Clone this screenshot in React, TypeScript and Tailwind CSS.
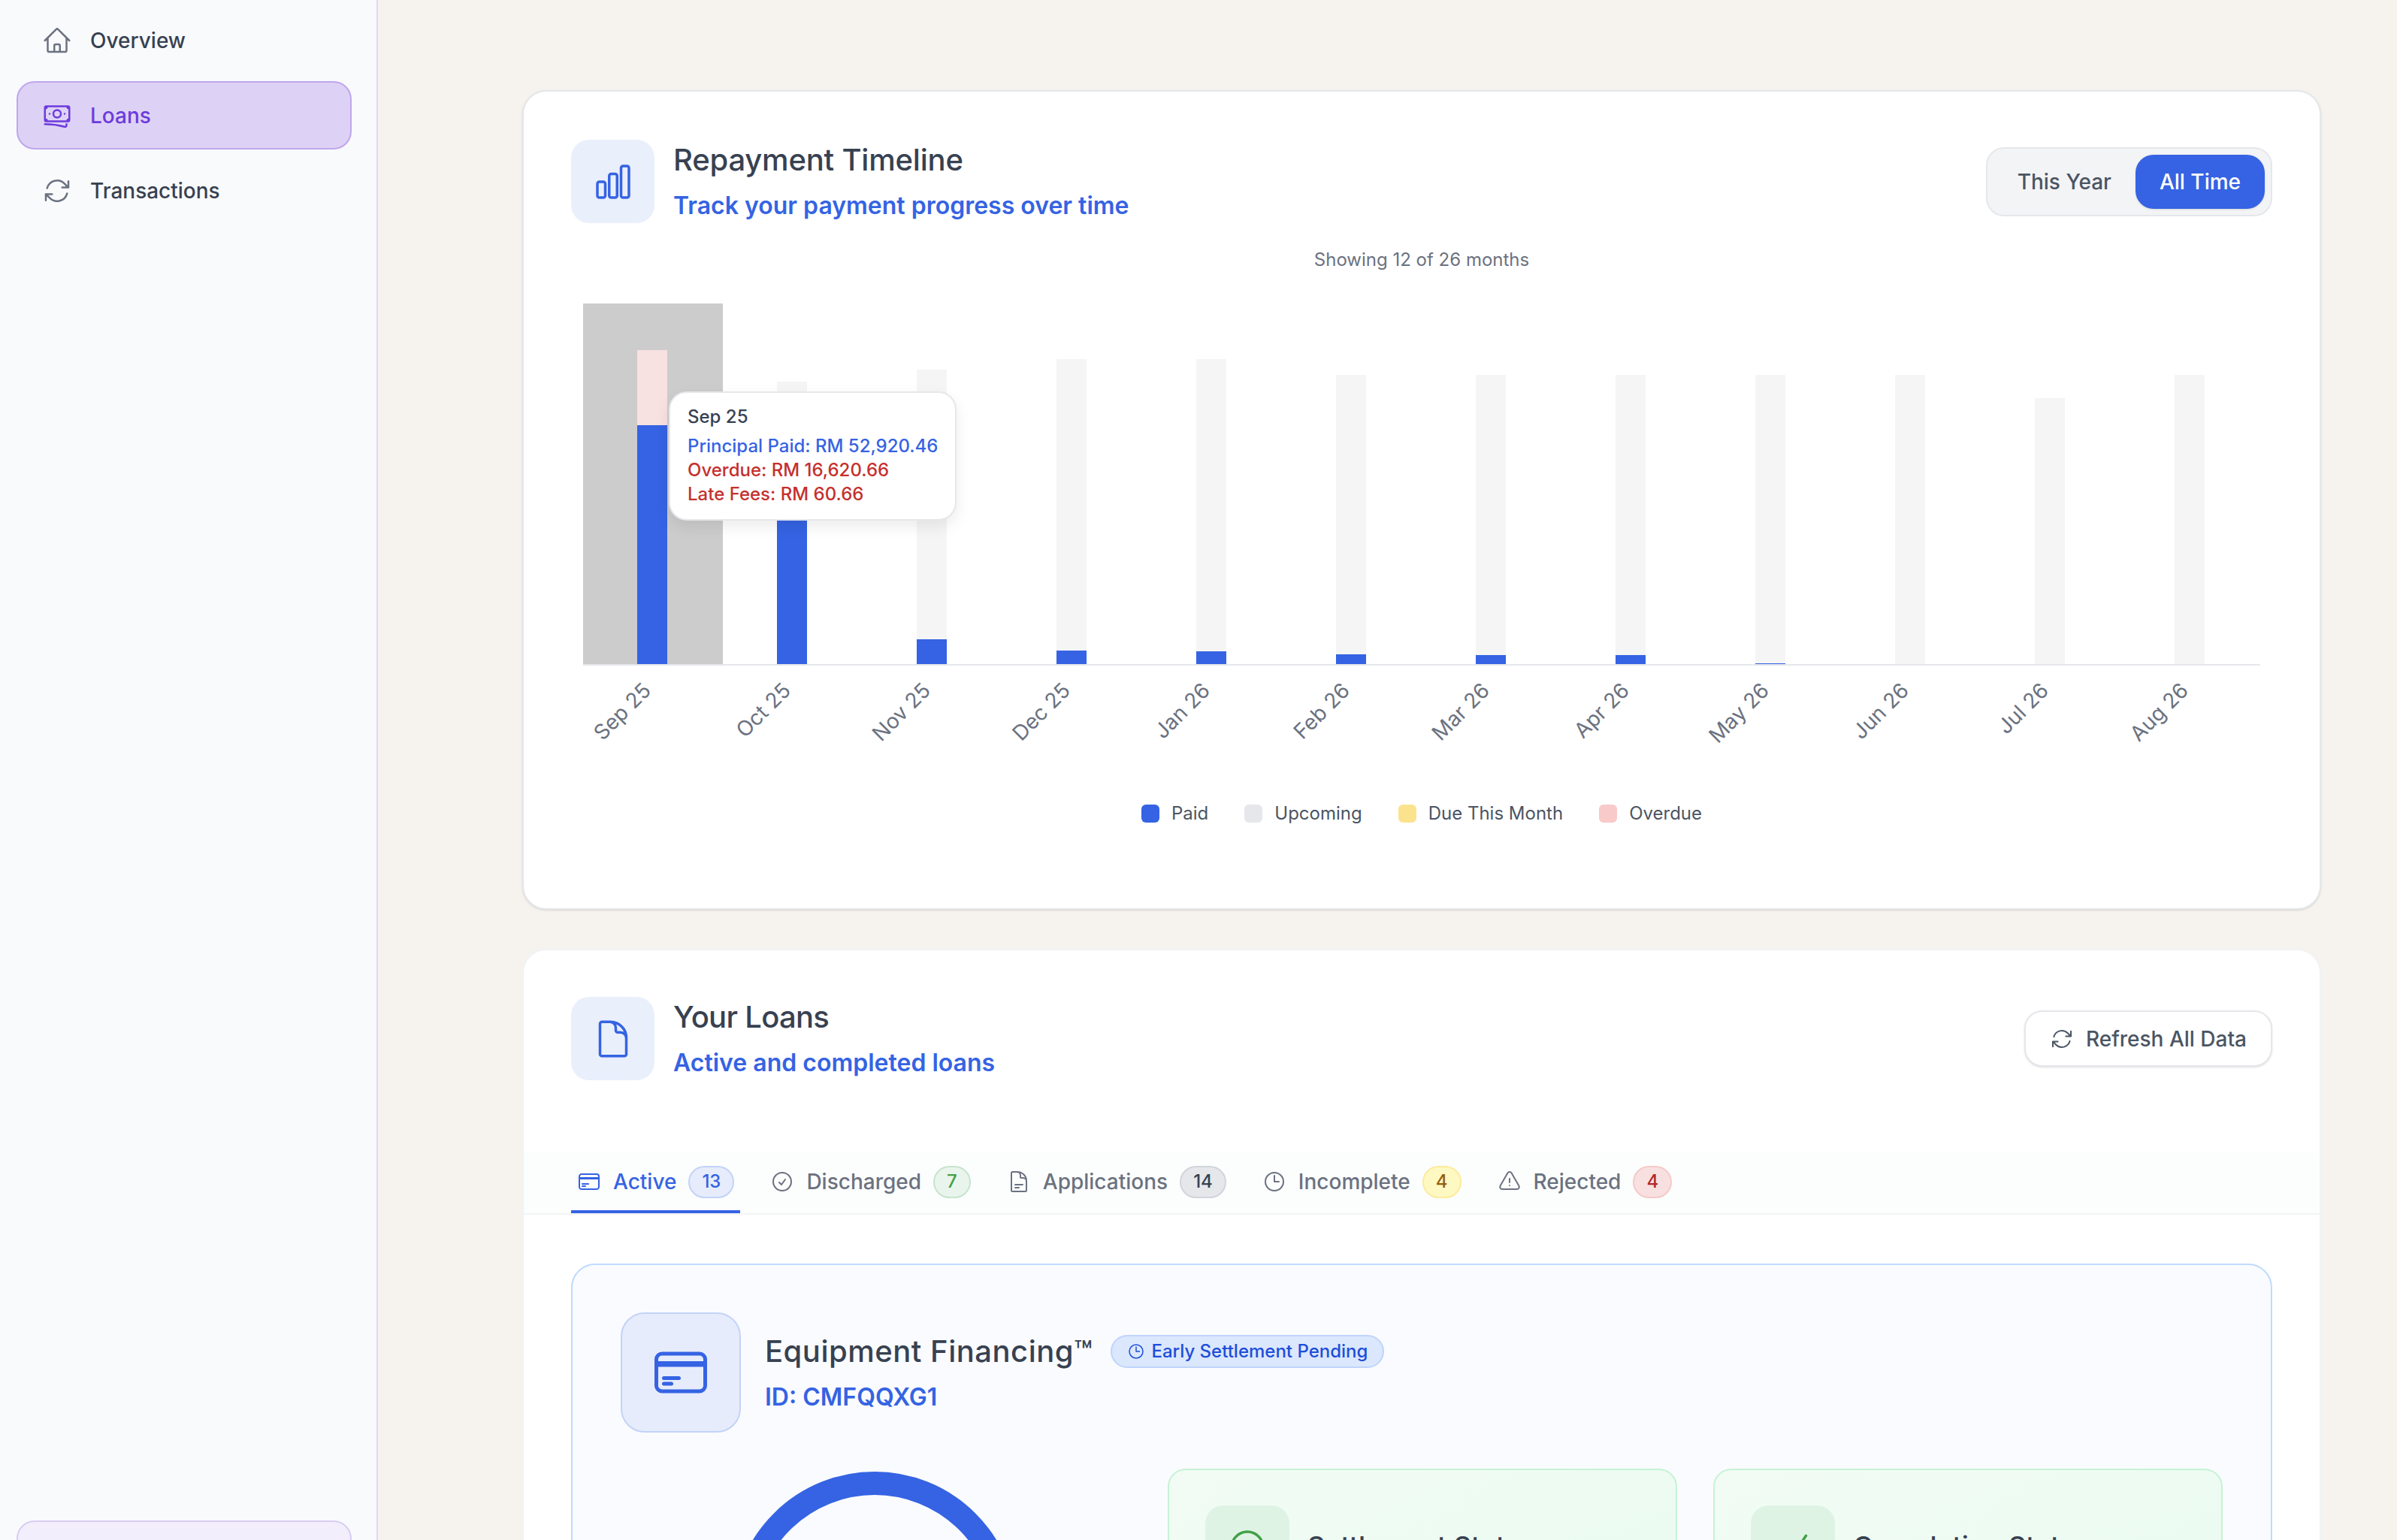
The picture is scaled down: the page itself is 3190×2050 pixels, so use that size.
import {
  HiOutlineHome,
  HiOutlineBanknotes,
  HiOutlineArrowPath,
  HiOutlineChartBar,
  HiOutlineDocument,
  HiOutlineCreditCard,
  HiOutlineCheckCircle,
  HiOutlineCheck,
  HiOutlineDocumentText,
  HiOutlineClock,
  HiOutlineExclamationTriangle,
} from "react-icons/hi2";

const months = [
  { label: "Sep 25", top: 465, paid: 565, overdue: true },
  { label: "Oct 25", top: 507, paid: 650 },
  { label: "Nov 25", top: 491, paid: 850 },
  { label: "Dec 25", top: 477, paid: 865 },
  { label: "Jan 26", top: 477, paid: 866 },
  { label: "Feb 26", top: 498, paid: 870 },
  { label: "Mar 26", top: 498, paid: 871 },
  { label: "Apr 26", top: 498, paid: 871 },
  { label: "May 26", top: 498, paid: 882 },
  { label: "Jun 26", top: 498, paid: 884 },
  { label: "Jul 26", top: 529, paid: 884 },
  { label: "Aug 26", top: 498, paid: 884 },
];

const BLUE = "#3563e3";
const CHART_TOP = 380;
const BASE = 884;

const tabs = [
  { label: "Active", count: "13", Icon: HiOutlineCreditCard, active: true, badge: "bg-[#e6ecfb] border-[#c3d3f8] text-[#3563e3] px-[16px]" },
  { label: "Discharged", count: "7", Icon: HiOutlineCheckCircle, badge: "bg-[#e9f5ec] border-[#c6e4cd] text-[#43a047] px-[16px]" },
  { label: "Applications", count: "14", Icon: HiOutlineDocumentText, badge: "bg-[#e5e7eb] border-[#d1d5db] text-[#374151] px-[16px]" },
  { label: "Incomplete", count: "4", Icon: HiOutlineClock, badge: "bg-[#fef9c3] border-[#fdeb9b] text-[#92600e] px-[16px]" },
  { label: "Rejected", count: "4", Icon: HiOutlineExclamationTriangle, badge: "bg-[#f8e0e0] border-[#f6c9c9] text-[#b02a2a] px-[16px]" },
];

const legend = [
  { label: "Paid", color: "bg-[#3563e3]" },
  { label: "Upcoming", color: "bg-[#e5e7eb]" },
  { label: "Due This Month", color: "bg-[#fbe38e]" },
  { label: "Overdue", color: "bg-[#f9caca]" },
];

const Chart = () => (
  <div className="relative mt-[19px] h-[620px]">
    <svg width="2264" height="620" viewBox="0 0 2264 620">
      <rect x="16" y={403 - CHART_TOP} width="186" height={BASE - 403} fill="#cccccc" />
      {months.map((m, i) => {
        const x = 88 + i * 186;
        return (
          <g key={m.label}>
            <rect
              x={x}
              y={m.top - CHART_TOP}
              width="40"
              height={m.paid - m.top}
              fill={m.overdue ? "#f7e1e1" : "#f5f5f5"}
            />
            <rect x={x} y={m.paid - CHART_TOP} width="40" height={BASE - m.paid} fill={BLUE} />
            <text
              x={x + 20}
              y={BASE - CHART_TOP + 36}
              textAnchor="end"
              fontSize="28"
              fill="#6b7280"
              transform={`rotate(-45 ${x + 20} ${BASE - CHART_TOP + 36})`}
            >
              {m.label}
            </text>
          </g>
        );
      })}
      <rect x="16" y={BASE - CHART_TOP - 1} width="2232" height="2" fill="#e5e7eb" />
    </svg>
    <div className="absolute left-[130px] top-[140px] w-[383px] h-[172px] rounded-[24px] border-2 border-[#e5e7eb] bg-white pl-[23px] pt-[16px] shadow-[0_8px_20px_rgba(0,0,0,0.08)] text-[24px] leading-[32px] font-medium">
      <div className="text-[#374151] mb-[7px]">Sep 25</div>
      <div className="text-[#3563e3]">Principal Paid: RM 52,920.46</div>
      <div className="text-[#c5302c]">Overdue: RM 16,620.66</div>
      <div className="text-[#c5302c]">Late Fees: RM 60.66</div>
    </div>
  </div>
);

const SectionHeader = ({
  Icon,
  title,
  subtitle,
  titleClass,
  children,
}: {
  Icon: React.ElementType;
  title: string;
  subtitle: string;
  titleClass: string;
  children: React.ReactNode;
}) => (
  <div className="flex items-center justify-between">
    <div className="flex items-center gap-[25px]">
      <div className="w-[111px] h-[111px] rounded-[24px] bg-[#e9effb] flex items-center justify-center">
        <Icon className="w-[56px] h-[56px] text-[#3563e3]" />
      </div>
      <div className="-mt-[1px] -mb-[1px]">
        <div className={`text-[40px] leading-[56px] font-medium text-[#374151] ${titleClass}`}>{title}</div>
        <div className="mt-[9px] text-[32px] leading-[48px] font-semibold text-[#3563e3]">{subtitle}</div>
      </div>
    </div>
    {children}
  </div>
);

const StatusCard = ({
  title,
  Icon,
}: {
  title: string;
  Icon: React.ElementType;
}) => (
  <div className="flex-1 h-[300px] rounded-[24px] border-2 border-[#c6f3d4] bg-linear-to-br from-[#f2fcf5] to-[#e8faef] pl-[48px] pt-[47px]">
    <div className="flex gap-[24px]">
      <div className="w-[112px] h-[112px] rounded-[24px] bg-[#dff3e5] flex items-center justify-center shrink-0">
        <Icon className="w-[56px] h-[56px] text-[#43a047]" />
      </div>
      <div className="pt-[30px] text-[36px] leading-[48px] font-medium text-[#374151]">{title}</div>
    </div>
  </div>
);

const App = () => {
  return (
    <div className="flex w-[3190px] h-[2050px] overflow-hidden bg-[#f6f3ee] [font-family:Inter,sans-serif]">
      <aside className="w-[503px] h-full shrink-0 flex flex-col bg-[#f9fafc] border-r-2 border-[#e2d9f6] pl-[22px] pr-[33px] pt-[8px]">
        <div className="flex flex-col gap-[9px]">
          <div className="h-[91px] flex items-center pl-[34px] text-[28px] font-medium text-[#374151]">
            <HiOutlineHome className="w-[40px] h-[40px] mr-[24px] text-[#6b7280]" />
            Overview
          </div>
          <div className="h-[91px] flex items-center pl-[32px] rounded-[24px] border-2 border-[#bfa6ee] bg-[#ddd2f5] text-[28px] font-medium text-[#6d3bdb]">
            <HiOutlineBanknotes className="w-[40px] h-[40px] mr-[24px]" />
            Loans
          </div>
          <div className="h-[91px] flex items-center pl-[34px] text-[28px] font-medium text-[#374151]">
            <HiOutlineArrowPath className="w-[40px] h-[40px] mr-[24px] text-[#6b7280]" />
            Transactions
          </div>
        </div>
        <div className="mt-auto -mb-[65px] h-[91px] shrink-0 rounded-[24px] border-2 border-[#d9cdf3] bg-[#f2eefb]" />
      </aside>

      <main className="flex-1 pl-[192px] pr-[101px] pt-[120px]">
        <section className="h-[1091px] rounded-[32px] border-2 border-[#e5e7eb] bg-white px-[63px] pt-[64px] shadow-sm">
          <SectionHeader
            Icon={HiOutlineChartBar}
            title="Repayment Timeline"
            subtitle="Track your payment progress over time"
            titleClass="tracking-[-0.2px]"
          >
            <div className="h-[92px] flex items-center rounded-[24px] border-2 border-[#e5e7eb] bg-[#f3f4f6] px-[8px] text-[28px] font-medium">
              <div className="px-[32px] text-[#4b5563]">This Year</div>
              <div className="h-[72px] flex items-center px-[32px] rounded-[24px] bg-[#3563e3] text-white shadow-sm">All Time</div>
            </div>
          </SectionHeader>
          <div className="mt-[33px] text-center text-[24px] leading-[32px] text-[#6b7280]">Showing 12 of 26 months</div>
          <Chart />
          <div className="mt-[66px] flex justify-center gap-[48px] text-[24px] leading-[32px] text-[#4b5563]">
            {legend.map((item) => (
              <div key={item.label} className="flex items-center gap-[16px]">
                <div className={`w-[24px] h-[24px] rounded-[6px] ${item.color}`} />
                {item.label}
              </div>
            ))}
          </div>
        </section>

        <section className="mt-[52px] h-[1200px] rounded-[32px] border-2 border-[#f1f2f4] bg-white pt-[62px]">
          <div className="px-[63px]">
            <SectionHeader
              Icon={HiOutlineDocument}
              title="Your Loans"
              subtitle="Active and completed loans"
              titleClass="tracking-[-0.7px]"
            >
              <div className="h-[75px] flex items-center gap-[16px] px-[32px] rounded-[24px] border-2 border-[#e5e7eb] bg-white text-[28px] font-medium text-[#4b5563] shadow-sm">
                <HiOutlineArrowPath className="w-[32px] h-[32px]" />
                Refresh All Data
              </div>
            </SectionHeader>
          </div>

          <div className="mt-[96px] h-[83px] flex gap-[32px] px-[63px] pt-[1px] bg-[#fcfdfd] border-b-2 border-[#f3f4f6]">
            {tabs.map((tab) => (
              <div
                key={tab.label}
                className={`h-[80px] flex items-center pl-[8px] pr-[8px] border-b-4 text-[28px] font-medium ${
                  tab.active ? "border-[#3563e3] text-[#3563e3]" : "border-transparent text-[#6b7280]"
                }`}
              >
                <tab.Icon className="w-[32px] h-[32px] mr-[16px]" />
                {tab.label}
                <div className={`ml-[16px] h-[43px] flex items-center rounded-full border-2 text-[24px] font-medium ${tab.badge}`}>
                  {tab.count}
                </div>
              </div>
            ))}
          </div>

          <div className="mx-[63px] mt-[65px] h-[800px] rounded-[32px] border-2 border-[#bfdbfe] bg-[#fafbff] px-[64px] pt-[63px]">
            <div className="flex items-center gap-[32px]">
              <div className="w-[160px] h-[160px] rounded-[32px] border-2 border-[#c3d3f8] bg-[#e6ecfb] flex items-center justify-center">
                <HiOutlineCreditCard className="w-[80px] h-[80px] text-[#3563e3]" />
              </div>
              <div>
                <div className="flex items-center gap-[24px]">
                  <div className="text-[40px] leading-[56px] font-medium text-[#374151] tracking-[0.5px]">Equipment Financing™</div>
                  <div className="h-[44px] flex items-center gap-[8px] rounded-full border-2 border-[#bfd4fb] bg-[#dbe7fd] px-[20px] text-[24px] font-medium text-[#1d4ed8]">
                    <HiOutlineClock className="w-[24px] h-[24px]" />
                    Early Settlement Pending
                  </div>
                </div>
                <div className="mt-[9px] text-[32px] leading-[48px] font-semibold text-[#3563e3]">ID: CMFQQXG1</div>
              </div>
            </div>

            <div className="mt-[48px] flex">
              <div className="w-[728px] shrink-0 flex justify-center">
                <svg width="380" height="380" viewBox="0 0 380 380" className="ml-[-52px] mt-[4px]">
                  <circle cx="190" cy="190" r="174.5" fill="none" stroke="#3563e3" strokeWidth="31" />
                </svg>
              </div>
              <div className="flex-1 flex gap-[48px]">
                <StatusCard title="Settlement Status" Icon={HiOutlineCheckCircle} />
                <StatusCard title="Completion Status" Icon={HiOutlineCheck} />
              </div>
            </div>
          </div>
        </section>
      </main>
    </div>
  );
};

export default App;
